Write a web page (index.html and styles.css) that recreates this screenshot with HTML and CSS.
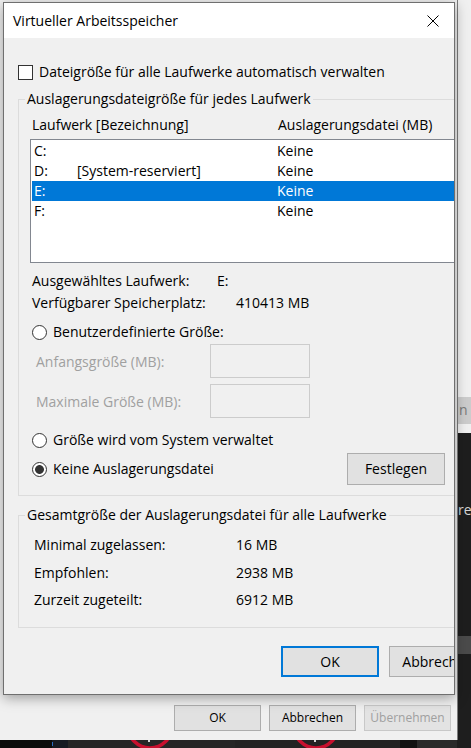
FILE: index.html
```html
<!DOCTYPE html>
<html lang="de">
<head>
<meta charset="utf-8">
<title>Virtueller Arbeitsspeicher</title>
<link rel="stylesheet" href="styles.css">
</head>
<body>
<div class="desktop">
  <div class="side-window">
    <div class="side-btn">n</div>
  </div>
  <span class="side-text">re</span>
  <div class="side-band"></div>

  <div class="back-window">
    <div class="back-buttons">
      <button class="btn btn-back">OK</button>
      <button class="btn btn-back">Abbrechen</button>
      <button class="btn btn-back" disabled>Übernehmen</button>
    </div>
  </div>

  <svg class="strip" width="471" height="8" viewBox="0 0 471 8">
    <rect x="0" y="0" width="52" height="8" fill="#0b0b0b"/>
    <rect x="52" y="0" width="16" height="8" fill="#161a22"/>
    <rect x="52" y="2" width="1" height="4" fill="#2a6bc0"/>
    <rect x="68" y="0" width="167" height="8" fill="#262626"/>
    <rect x="235" y="0" width="165" height="8" fill="#232323"/>
    <rect x="400" y="0" width="17" height="8" fill="#121212"/>
    <rect x="417" y="0" width="40" height="8" fill="#2a2a2a"/>
    <circle cx="150" cy="-14" r="22" fill="none" stroke="#c8102e" stroke-width="3.5"/>
    <circle cx="316" cy="-14" r="22" fill="none" stroke="#c8102e" stroke-width="3.5"/>
    <rect x="148" y="0" width="2" height="2" fill="#d8d8d8"/>
    <rect x="314" y="0" width="2" height="2" fill="#d8d8d8"/>
  </svg>

  <div class="dialog">
    <div class="titlebar">
      <span class="title">Virtueller Arbeitsspeicher</span>
      <svg class="close" width="12" height="12" viewBox="0 0 12 12">
        <path d="M0.5 0.5 L11.5 11.5 M11.5 0.5 L0.5 11.5" stroke="#000" stroke-width="1" fill="none"/>
      </svg>
    </div>
    <div class="dlg-body">
      <div class="check-row"><span class="checkbox"></span><span>Dateigröße für alle Laufwerke automatisch verwalten</span></div>

      <fieldset class="group group-drives">
        <legend>Auslagerungsdateigröße für jedes Laufwerk</legend>
        <div class="list-head"><span class="col-drive">Laufwerk [Bezeichnung]</span><span>Auslagerungsdatei (MB)</span></div>
        <div class="listbox">
          <div class="list-row"><span class="c1">C:</span><span class="c2"></span><span>Keine</span></div>
          <div class="list-row"><span class="c1">D:</span><span class="c2">[System-reserviert]</span><span>Keine</span></div>
          <div class="list-row selected"><span class="c1">E:</span><span class="c2"></span><span>Keine</span></div>
          <div class="list-row"><span class="c1">F:</span><span class="c2"></span><span>Keine</span></div>
        </div>
        <div class="info-row info-first"><span class="lbl-sel">Ausgewähltes Laufwerk:</span><span>E:</span></div>
        <div class="info-row info-second"><span class="lbl-free">Verfügbarer Speicherplatz:</span><span>410413 MB</span></div>

        <div class="radio-row radio-custom"><span class="radio"></span><span>Benutzerdefinierte Größe:</span></div>
        <div class="size-row size-first"><span class="size-label">Anfangsgröße (MB):</span><span class="textbox"></span></div>
        <div class="size-row size-second"><span class="size-label">Maximale Größe (MB):</span><span class="textbox"></span></div>
        <div class="radio-row radio-system"><span class="radio"></span><span>Größe wird vom System verwaltet</span></div>
        <div class="radio-row with-btn">
          <span class="opt"><span class="radio checked"></span><span>Keine Auslagerungsdatei</span></span>
          <button class="btn btn-set">Festlegen</button>
        </div>
      </fieldset>

      <fieldset class="group group-total">
        <legend>Gesamtgröße der Auslagerungsdatei für alle Laufwerke</legend>
        <div class="total-row total-1"><span class="lbl-total">Minimal zugelassen:</span><span>16 MB</span></div>
        <div class="total-row total-2"><span class="lbl-total">Empfohlen:</span><span>2938 MB</span></div>
        <div class="total-row total-3"><span class="lbl-total">Zurzeit zugeteilt:</span><span>6912 MB</span></div>
      </fieldset>

      <div class="dlg-buttons">
        <button class="btn btn-dlg btn-default">OK</button>
        <button class="btn btn-dlg">Abbrechen</button>
      </div>
    </div>
  </div>
</div>
</body>
</html>
```

FILE: styles.css
```css
* { box-sizing: border-box; }
html, body { margin: 0; padding: 0; }
body {
  width: 471px;
  height: 748px;
  overflow: hidden;
  background: #1e1e1e;
  font-family: "Open Sans", "Noto Sans", sans-serif;
  font-size: 14px;
  color: #000;
}
.desktop { position: relative; width: 471px; height: 748px; overflow: hidden; }

/* windows behind */
.back-window {
  position: absolute; left: 0; top: 0;
  width: 458px; height: 740px;
  background: #f0f0f0;
  border-right: 1px solid #7d7d7d;
  display: flex; align-items: flex-end; justify-content: flex-end;
  padding: 0 6px 9px 0;
}
.back-buttons { display: flex; gap: 8px; }
.btn {
  font: inherit; color: #000;
  background: #e1e1e1;
  border: 1px solid #adadad;
  width: 87px; height: 26px;
  padding: 0; margin: 0;
  text-align: center;
  line-height: 22px;
}
.btn-back { font-size: 12px; }
.btn:disabled { color: #a0a0a0; border-color: #c8c8c8; background: #e3e3e3; }

.side-window {
  position: absolute; left: 458px; top: 0;
  width: 13px; height: 433px;
  background: #f0f0f0;
  display: flex; flex-direction: column; justify-content: flex-end;
  padding-bottom: 9px;
}
.side-btn {
  height: 27px; background: #cccccc; color: #7a7a7a;
  line-height: 26px; padding-left: 1px; overflow: hidden; white-space: nowrap;
}
.side-text { position: absolute; left: 458px; top: 500px; color: #d6d6d6; line-height: 20px; }
.side-band { position: absolute; left: 458px; top: 636px; width: 13px; height: 18px; background: #4b4b4b; }
.strip { position: absolute; left: 0; top: 740px; display: block; }

/* dialog */
.dialog {
  position: absolute; left: 3px; top: 2px;
  width: 452px; height: 693px;
  background: #f0f0f0;
  border: 1px solid #6f6f6f;
  overflow: hidden;
  box-shadow: 0 3px 12px rgba(0, 0, 0, 0.35);
}
.titlebar {
  height: 35px; background: #fff;
  display: flex; align-items: center;
  padding-left: 9px;
}
.title { line-height: 20px; }
.close { margin-left: auto; margin-right: 15px; flex: none; display: block; }

.dlg-body { width: 500px; padding-left: 14px; }

.check-row { display: flex; align-items: center; height: 20px; line-height: 20px; margin-top: 24px; }
.checkbox {
  width: 15px; height: 15px; flex: none;
  border: 1px solid #333; background: #fff;
  margin-right: 6px;
}

.group {
  margin: 7px 0 0 0;
  padding: 0 0 10px 0;
  border: 1px solid #dcdcdc;
  width: 480px; min-width: 0;
}
.group legend { margin-left: 6px; padding: 0 2px; line-height: 20px; }

.list-head { display: flex; height: 20px; line-height: 20px; margin-top: 6px; padding-left: 13px; }
.col-drive { width: 246px; }
.listbox {
  margin: 4px 0 0 11px;
  height: 124px;
  border: 1px solid #828790;
  background: #fff;
  padding: 1px;
}
.list-row { display: flex; height: 20px; line-height: 20px; padding-left: 2px; }
.list-row .c1 { width: 43px; }
.list-row .c2 { width: 200px; }
.list-row.selected { background: #0078d7; color: #fff; }

.info-row { display: flex; height: 20px; line-height: 20px; padding-left: 13px; }
.info-first { margin-top: 8px; }
.info-second { margin-top: 2px; }
.lbl-sel { width: 185px; }
.lbl-free { width: 204px; }

.radio-row { display: flex; align-items: center; height: 20px; line-height: 20px; padding-left: 13px; }
.radio-custom { margin-top: 9px; }
.radio-system { margin-top: 12px; }
.radio {
  width: 15px; height: 15px; flex: none;
  border: 1px solid #333; border-radius: 50%;
  background: #fff;
  margin-right: 6px;
}
.radio.checked { background: radial-gradient(circle, #333 0 4px, #fff 4.8px); }
.with-btn { height: 32px; margin-top: 3px; }
.opt { flex: 0 0 315px; display: flex; align-items: center; }
.btn-set { width: 98px; height: 32px; line-height: 28px; }

.size-row { display: flex; align-items: center; height: 34px; padding-left: 17px; color: #a0a0a0; }
.size-first { margin-top: 2px; }
.size-second { margin-top: 6px; }
.size-label { width: 174px; }
.textbox { width: 100px; height: 34px; border: 1px solid #cccccc; background: #f0f0f0; }

.group-total { margin-top: 9px; padding-bottom: 17px; }
.total-row { display: flex; height: 20px; line-height: 20px; padding-left: 15px; }
.total-1 { margin-top: 10px; }
.total-2 { margin-top: 8px; }
.total-3 { margin-top: 7px; }
.lbl-total { width: 202px; }

.dlg-buttons { display: flex; gap: 10px; margin-top: 18px; padding-left: 263px; }
.btn-dlg { width: 98px; height: 31px; line-height: 27px; }
.btn-default { border: 2px solid #0078d7; }
```
